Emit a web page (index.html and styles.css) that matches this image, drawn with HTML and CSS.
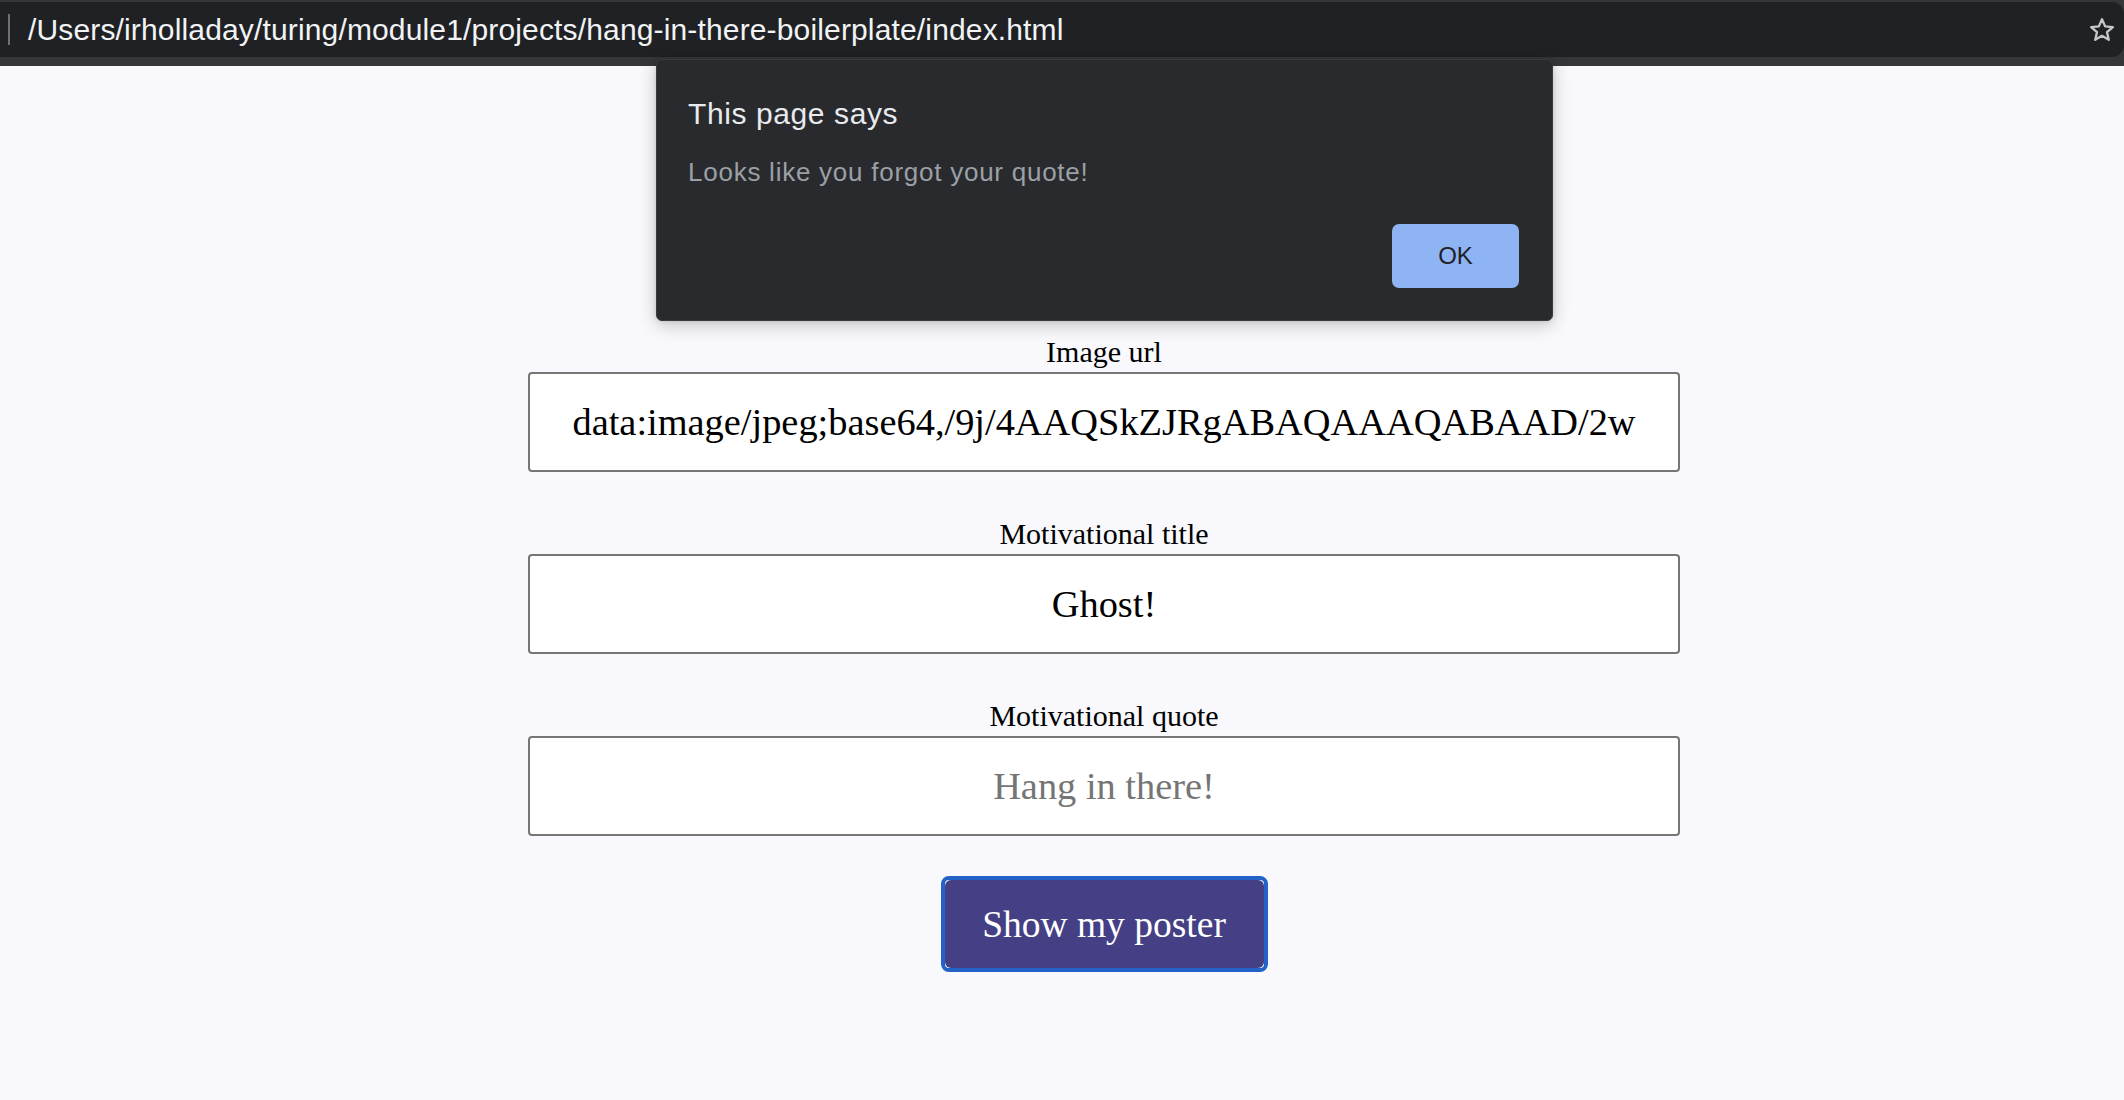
FILE: index.html
```html
<!DOCTYPE html>
<html lang="en">
<head>
<meta charset="utf-8">
<title>Hang in there</title>
<link rel="stylesheet" href="styles.css">
</head>
<body>
<header class="toolbar">
  <div class="omnibox">
    <span class="sep"></span>
    <span class="url">/Users/irholladay/turing/module1/projects/hang-in-there-boilerplate/index.html</span>
    <svg class="star" viewBox="0 0 24 24" width="28" height="28" aria-hidden="true">
      <path d="M12 2.8l2.7 6.1 6.6.6-5 4.4 1.5 6.5L12 17l-5.8 3.4 1.5-6.5-5-4.4 6.6-.6z" fill="none" stroke="#c4c7c5" stroke-width="2" stroke-linejoin="round"/>
    </svg>
  </div>
</header>
<main class="page">
  <form class="form">
    <label class="label" for="url">Image url</label>
    <input class="field" id="url" type="text" value="data:image/jpeg;base64,/9j/4AAQSkZJRgABAQAAAQABAAD/2w">
    <label class="label" for="title">Motivational title</label>
    <input class="field" id="title" type="text" value="Ghost!">
    <label class="label" for="quote">Motivational quote</label>
    <input class="field" id="quote" type="text" placeholder="Hang in there!">
    <button class="show" type="button"><span class="show-inner">Show my poster</span></button>
  </form>
</main>
<div class="dialog" role="alertdialog">
  <div class="dialog-title">This page says</div>
  <div class="dialog-msg">Looks like you forgot your quote!</div>
  <div class="dialog-actions"><button class="ok" type="button">OK</button></div>
</div>
</body>
</html>
```
FILE: styles.css
```css
html, body {
  margin: 0;
  padding: 0;
}
body {
  background: #f8f8fd;
  height: 1100px;
  overflow: hidden;
  position: relative;
}
.toolbar {
  background: #35363a;
  height: 66px;
  box-sizing: border-box;
  padding-top: 2px;
}
.omnibox {
  height: 55px;
  background: #202124;
  border-radius: 0 12px 12px 0;
  display: flex;
  align-items: center;
  font-family: "Liberation Sans", Arial, sans-serif;
}
.sep {
  width: 2px;
  height: 31px;
  background: #6f7175;
  margin-left: 8px;
  margin-right: 18px;
}
.url {
  color: #f1f3f4;
  font-size: 30px;
  letter-spacing: 0.15px;
  flex: 1;
  white-space: nowrap;
}
.star {
  margin-right: 8px;
}
.page {
  padding: 269px 0 0 84px;
}
.form {
  width: 1152px;
  margin: 0 auto;
  display: flex;
  flex-direction: column;
  align-items: center;
  font-family: "Liberation Serif", "Times New Roman", serif;
}
.label {
  font-size: 30px;
  line-height: 34px;
  margin: 45px 0 3px;
  color: #000;
}
.label:first-child {
  margin-top: 0;
}
.field {
  box-sizing: border-box;
  width: 1152px;
  height: 100px;
  border: 2px solid #767676;
  border-radius: 4px;
  background: #fff;
  font-family: "Liberation Serif", "Times New Roman", serif;
  font-size: 38.4px;
  color: #000;
  text-align: center;
  padding: 0 10px;
  outline: none;
}
.field::placeholder {
  color: #757575;
}
.show {
  margin-top: 40px;
  width: 327px;
  height: 96px;
  box-sizing: border-box;
  border: 4px solid #2462c8;
  border-radius: 8px;
  background: #fff;
  padding: 0;
  display: flex;
  cursor: pointer;
}
.show-inner {
  flex: 1;
  display: flex;
  align-items: center;
  justify-content: center;
  background: #453f85;
  border-radius: 6px;
  color: #fff;
  font-family: "Liberation Serif", "Times New Roman", serif;
  font-size: 37.5px;
}
.dialog {
  position: absolute;
  left: 656px;
  top: 59px;
  width: 897px;
  height: 262px;
  box-sizing: border-box;
  background: #292a2d;
  border: 1px solid #3a3b3f;
  border-radius: 6px;
  box-shadow: 0 4px 18px rgba(0, 0, 0, 0.22), 0 0 4px rgba(0, 0, 0, 0.12);
  padding: 36px 33px 32px 31px;
  display: flex;
  flex-direction: column;
  font-family: "Liberation Sans", Arial, sans-serif;
}
.dialog-title {
  color: #e8eaed;
  font-size: 30px;
  line-height: 36px;
  letter-spacing: 0.6px;
}
.dialog-msg {
  color: #9aa0a6;
  font-size: 26px;
  line-height: 32px;
  margin-top: 24px;
  letter-spacing: 0.75px;
}
.dialog-actions {
  margin-top: auto;
  display: flex;
  justify-content: flex-end;
}
.ok {
  width: 127px;
  height: 64px;
  border: none;
  border-radius: 7px;
  background: #8fb4f4;
  color: #202124;
  font-family: "Liberation Sans", Arial, sans-serif;
  font-size: 24px;
}
```
